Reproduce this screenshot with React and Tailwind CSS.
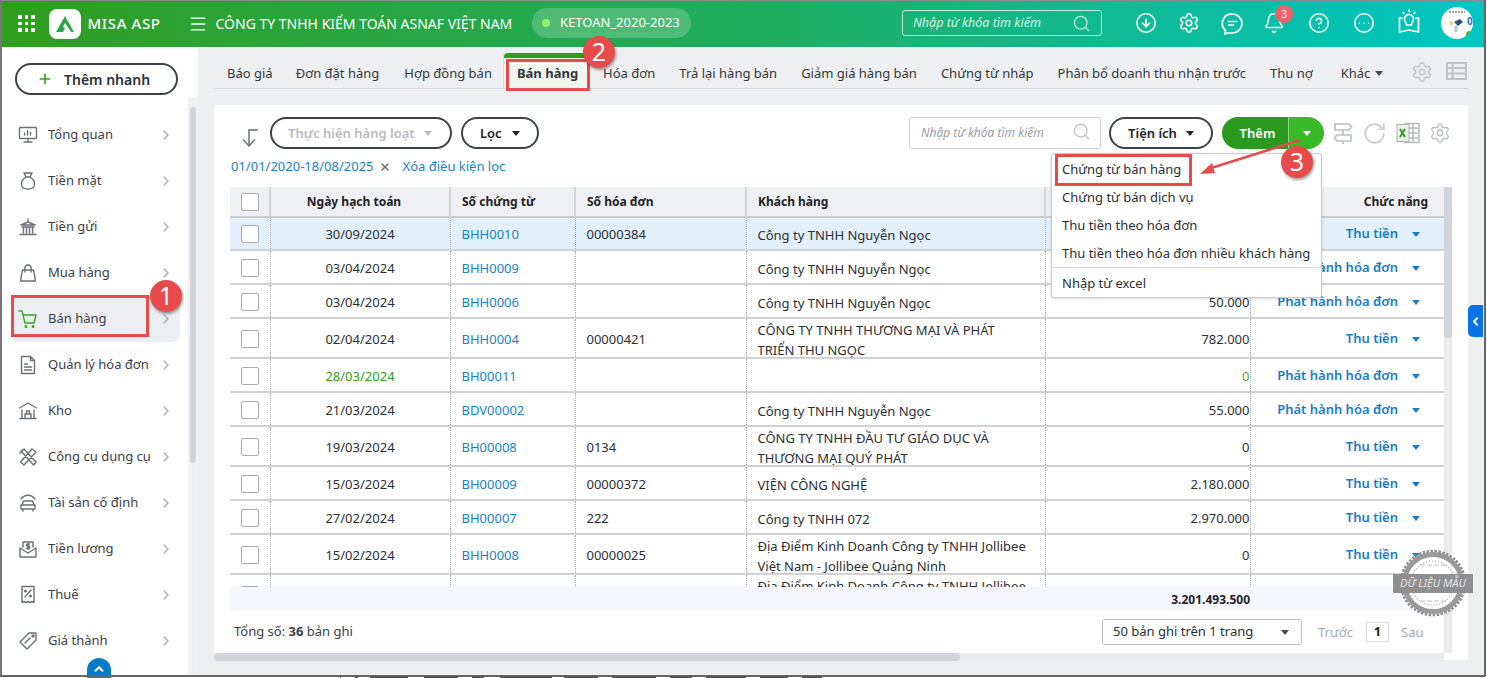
import { ChevronRight, CircleArrowDown, Settings, Bell, CircleHelp, CircleEllipsis, Search, Plus, X, Menu, RotateCw, ChevronUp, ChevronLeft } from 'lucide-react';

const FONT = 'font-["Noto_Sans","Liberation_Sans",sans-serif]';

const tabs = ['Báo giá', 'Đơn đặt hàng', 'Hợp đồng bán', 'Bán hàng', 'Hóa đơn', 'Trả lại hàng bán', 'Giảm giá hàng bán', 'Chứng từ nháp', 'Phân bổ doanh thu nhận trước', 'Thu nợ'];

const tabClass = {
  'Đơn đặt hàng': '-ml-[1px]',
  'Hợp đồng bán': 'ml-[1px]',
  'Bán hàng': 'font-bold ml-[1px] mr-[1px]',
};

const rows = [
  { h: 'h-[33px]', date: '30/09/2024', no: 'BHH0010', inv: '00000384', cust: 'Công ty TNHH Nguyễn Ngọc', amt: '', act: 'Thu tiền', on: true },
  { h: 'h-[34px]', date: '03/04/2024', no: 'BHH0009', inv: '', cust: 'Công ty TNHH Nguyễn Ngọc', amt: '', act: 'Phát hành hóa đơn' },
  { h: 'h-[34px]', date: '03/04/2024', no: 'BHH0006', inv: '', cust: 'Công ty TNHH Nguyễn Ngọc', amt: '50.000', act: 'Phát hành hóa đơn' },
  { h: 'h-[40px]', date: '02/04/2024', no: 'BHH0004', inv: '00000421', cust: 'CÔNG TY TNHH THƯƠNG MẠI VÀ PHÁT TRIỂN THU NGỌC', amt: '782.000', act: 'Thu tiền' },
  { h: 'h-[34px]', date: '28/03/2024', no: 'BH00011', inv: '', cust: '', amt: '0', act: 'Phát hành hóa đơn', green: true },
  { h: 'h-[34px]', date: '21/03/2024', no: 'BDV00002', inv: '', cust: 'Công ty TNHH Nguyễn Ngọc', amt: '55.000', act: 'Phát hành hóa đơn' },
  { h: 'h-[40px]', date: '19/03/2024', no: 'BH00008', inv: '0134', cust: 'CÔNG TY TNHH ĐẦU TƯ GIÁO DỤC VÀ THƯƠNG MẠI QUÝ PHÁT', amt: '0', act: 'Thu tiền' },
  { h: 'h-[34px]', date: '15/03/2024', no: 'BH00009', inv: '00000372', cust: 'VIỆN CÔNG NGHỆ', amt: '2.180.000', act: 'Thu tiền' },
  { h: 'h-[34px]', date: '27/02/2024', no: 'BH00007', inv: '222', cust: 'Công ty TNHH 072', amt: '2.970.000', act: 'Thu tiền' },
  { h: 'h-[40px]', date: '15/02/2024', no: 'BHH0008', inv: '00000025', cust: 'Địa Điểm Kinh Doanh Công ty TNHH Jollibee Việt Nam - Jollibee Quảng Ninh', amt: '0', act: 'Thu tiền' },
  { h: 'h-[40px]', date: '', no: '', inv: '', cust: 'Địa Điểm Kinh Doanh Công ty TNHH Jollibee Việt Nam - Jollibee Quảng Ninh', amt: '', act: '' },
];

const Ico = ({ children, green }) => (
  <svg width="20" height="20" viewBox="0 0 20 20" fill="none" stroke={green ? '#35a526' : '#6b7075'} strokeWidth="1.4" strokeLinecap="round" strokeLinejoin="round">
    {children}
  </svg>
);

const menu = [
  { name: 'Tổng quan', icon: <Ico><rect x="1.5" y="2.5" width="17" height="11" rx="1" /><path d="M10 13.5v3M6 17h8M6.5 10V8M9.5 10V5.5M12.5 10V7.5" /></Ico> },
  { name: 'Tiền mặt', icon: <Ico><path d="M6 2h8l-2 4H8zM8 6c-3 2-5 5-4.500 8 .4 3 3 4 6.500 4s6-1 6.500-4c.5-3-1.500-6-4.500-8" /></Ico> },
  { name: 'Tiền gửi', icon: <Ico><path d="M10 2v2M3 8l7-3 7 3zM4 10h12M5.500 10v6M8.500 10v6M11.500 10v6M14.500 10v6M2 17.500h16" /></Ico> },
  { name: 'Mua hàng', icon: <Ico><path d="M4.500 7h11l2 11h-15zM7 9V5a3 3 0 0 1 6 0v4" /></Ico> },
  { name: 'Bán hàng', icon: <Ico green><path d="M1 2h3l3 12h9l2-8H5" /><circle cx="8" cy="17.500" r=".8" fill="#35a526" /><circle cx="15" cy="17.500" r=".8" fill="#35a526" /></Ico>, on: true },
  { name: 'Quản lý hóa đơn', icon: <Ico><path d="M3.500 1.500h9l4 4v13h-13zM12.500 1.500v4h4M6.500 9h3M6.500 12h7M6.500 15h7" /></Ico> },
  { name: 'Kho', icon: <Ico><path d="M1.500 7 10 2l8.500 5M4 9v8M16 9v8M2 17.500h16M7 17v-4h6v4M8.500 13v-3h3v3" /></Ico> },
  { name: 'Công cụ dụng cụ', icon: <Ico><path d="m3 4 3-2 12 13-2.500 3zM14 2l4 3-12 13-3.500-3zM2 6l3-3" /></Ico> },
  { name: 'Tài sản cố định', icon: <Ico><path d="M3 6c4-5 10-5 14 0M4 12l1.500-4h9L16 12M3 12h14v4H3zM5 16v2M15 16v2" /></Ico> },
  { name: 'Tiền lương', icon: <Ico><path d="M5 8V3h10v5M2 9l8 5 8-5v9H2zM10 4.500v6M8.500 9.500h2a1 1 0 0 0 0-2.500h-1a1 1 0 0 1 0-2h2" /></Ico> },
  { name: 'Thuế', icon: <Ico><path d="M4 1.500h12v16l-2-1-2 1-2-1-2 1-2-1-2 1zM13 5l-6 7" /><circle cx="7.500" cy="6" r=".8" /><circle cx="12.500" cy="11" r=".8" /></Ico> },
  { name: 'Giá thành', icon: <Ico><path d="M11 2h7v7l-9 9-7-7zM7 12l5-5" /><circle cx="15" cy="5" r="1" /></Ico> },
];

const Caret = ({ className }) => <span className={`inline-block w-0 h-0 border-x-[4.5px] border-x-transparent border-t-[5px] ${className}`} />;

const Circle = ({ n, className }) => (
  <div className={`absolute flex items-center justify-center rounded-full bg-[#e84b4b] text-white text-[25px] font-["Liberation_Sans",sans-serif] shadow-[1px_2px_3px_rgba(0,0,0,0.4)] ${className}`}>{n}</div>
);

const Logo = () => (
  <div className="w-8 h-[30px] rounded-[8px] bg-white flex items-center justify-center">
    <svg width="22" height="20" viewBox="0 0 22 20" fill="none">
      <path d="M11 2 2 18h7l2-4-2-1 2-4 6 9h3z" fill="#2fa54a" />
    </svg>
  </div>
);

export default function App() {
  return (
    <div className={`relative w-[1487px] h-[678px] overflow-hidden bg-white text-[13px] text-[#2b2f33] ${FONT}`}>
      {/* Header */}
      <header className="absolute left-0 top-0 w-[1485px] h-[47px] flex items-center text-white bg-gradient-to-r from-[#2f9e1c] via-[#1fad5c] to-[#00c6c4]">
        <div className="ml-[18px] grid grid-cols-3 gap-[3px]">
          {[...Array(9)].map((_, i) => <span key={i} className="w-[3.500px] h-[3.500px] bg-white" />)}
        </div>
        <div className="ml-[14px]"><Logo /></div>
        <div className="ml-[7px] w-[80px] text-[15px] font-medium tracking-[0.6px] whitespace-nowrap">MISA ASP</div>
        <Menu size={20} strokeWidth={1.6} className="ml-[20px]" />
        <div className="ml-[8px] text-[14px] whitespace-nowrap">CÔNG TY TNHH KIỂM TOÁN ASNAF VIỆT NAM</div>
        <div className="absolute left-[532px] top-[8px] w-[159px] h-[30px] rounded-full bg-white/20 flex items-center pl-[10px]">
          <span className="w-2 h-2 rounded-full bg-[#8cf06a]" />
          <span className="ml-[10px] text-[13px]">KETOAN_2020-2023</span>
        </div>
        <div className="absolute left-[902px] top-[10px] w-[200px] h-[26px] rounded-[3px] border border-white/70 flex items-center pl-[10px] pr-[10px]">
          <span className="italic text-[12.500px] text-white/80">Nhập từ khóa tìm kiếm</span>
          <Search size={19} strokeWidth={1.6} className="ml-auto text-white/70" />
        </div>
        <CircleArrowDown size={22} strokeWidth={1.7} className="absolute left-[1135px] top-[12px]" />
        <Settings size={22} strokeWidth={1.7} className="absolute left-[1178px] top-[12px]" />
        <svg width="23" height="23" viewBox="0 0 23 23" fill="none" stroke="white" strokeWidth="1.700" strokeLinecap="round" className="absolute left-[1221px] top-[12px]">
          <path d="M11.500 2a9.500 9.500 0 0 1 0 19H6l-2 1 .5-3.500A9.500 9.500 0 0 1 11.500 2zM7.500 9.500h8M7.500 13h5" />
        </svg>
        <Bell size={22} strokeWidth={1.7} className="absolute left-[1263px] top-[12px]" />
        <div className="absolute left-[1275px] top-[5px] w-[18px] h-[18px] rounded-full bg-[#f0626a] text-[10px] flex items-center justify-center">3</div>
        <CircleHelp size={22} strokeWidth={1.7} className="absolute left-[1308px] top-[12px]" />
        <CircleEllipsis size={22} strokeWidth={1.7} className="absolute left-[1353px] top-[12px]" />
        <svg width="24" height="26" viewBox="0 0 24 26" fill="none" stroke="white" strokeWidth="1.700" strokeLinecap="round" strokeLinejoin="round" className="absolute left-[1397px] top-[9px]">
          <path d="M12 1v1.500M6 3.500l1 1M18 3.500l-1 1M8.500 13a4.500 4.500 0 1 1 7 0c-.7 1-1 1.500-1 3h-5c0-1.500-.3-2-1-3zM5 9H2.500v14L12 21l9.500 2V9H19" />
        </svg>
        <div className="absolute left-[1441px] top-[7px] w-[32px] h-[32px] rounded-full bg-white overflow-hidden">
          <svg width="32" height="32" viewBox="0 0 32 32">
            <path d="M8 5h16" stroke="#444" strokeWidth="1" strokeDasharray="2 1" />
            <path d="M13 15l6-3 3 3-5 4z" fill="#2a4f86" />
            <path d="M8 14l5 2-3 3z" fill="#e9d36a" />
            <path d="M15 19v6" stroke="#a9cbd6" strokeWidth="3" />
            <circle cx="29" cy="28" r="4" fill="#4aa52e" />
          </svg>
          <span className="absolute left-[26px] top-[7px] text-[10px] font-bold text-[#1673d1]">0</span>
        </div>
      </header>

      {/* Sidebar */}
      <aside className="absolute left-0 top-[47px] w-[198px] h-[629px] bg-white">
        <button className="absolute left-[15px] top-[16px] w-[163px] h-8 rounded-full border-2 border-[#3d4247] flex items-center pl-[20px] text-[14px] font-semibold bg-white">
          <Plus size={16} strokeWidth={2.400} className="text-[#2f9e1c] mr-[11px]" />
          Thêm nhanh
        </button>
        <nav className="absolute left-[14px] top-[65px] w-[166px] flex flex-col">
          {menu.map((m) => (
            <div key={m.name} className={`h-[46px] flex items-center pl-[4px] pr-[6px] ${m.on ? 'bg-[#eceef1] rounded-r-[8px]' : ''}`}>
              <span className="w-[30px] shrink-0">{m.icon}</span>
              <span className="whitespace-nowrap text-[#3c4045]">{m.name}</span>
              <ChevronRight size={16} strokeWidth={2} className="ml-auto text-[#a9adb2]" />
            </div>
          ))}
        </nav>
        <div className="absolute left-[188px] top-[50px] w-[10px] h-[579px] bg-[#f1f1f1]">
          <div className="absolute left-[2px] top-[10px] w-[6px] h-[356px] rounded-full bg-[#d1d5db]" />
        </div>
        <div className="absolute left-[87px] top-[611px] w-6 h-[24px] rounded-t-full bg-[#0a7bc8] flex justify-center pt-[4px] text-white">
          <ChevronUp size={14} strokeWidth={3.500} />
        </div>
      </aside>

      {/* Main */}
      <main className="absolute left-[198px] top-[47px] w-[1287px] h-[629px] bg-[#eeeff1]">
        {/* Tabs */}
        <div className="absolute left-[16px] top-0 w-[1255px] h-[42px] border-b-[1.5px] border-[#d6d8db]">
          <div className="absolute left-[289px] top-[6px] w-[85px] h-[36px] bg-[#f1f7ef] border-x border-[#dcdee1]">
            <div className="h-[5px] bg-[#2f9e1c] rounded-t-[4px]" />
          </div>
          <div className="relative flex gap-6 pl-[13px] pt-[17px] items-center whitespace-nowrap text-[#33373b]">
            {tabs.map((t) => (
              <span key={t} className={tabClass[t] || ''}>{t}</span>
            ))}
            <span className="flex items-center gap-[5px] ml-1">Khác <Caret className="border-t-[#44484c]" /></span>
          </div>
        </div>
        <Settings size={22} strokeWidth={1.700} className="absolute left-[1213px] top-[14px] text-[#c3c6ca]" />
        <svg width="21" height="18" viewBox="0 0 21 18" fill="none" stroke="#bfc3c7" strokeWidth="2" className="absolute left-[1248px] top-[15px]">
          <rect x="1" y="1" width="19" height="16" /><path d="M1 6h19M1 11.500h19M6.500 1v16" />
        </svg>

        {/* Card */}
        <section className="absolute left-[16px] top-[58px] w-[1254px] h-[555px] bg-white">
          <div className="flex items-center pt-3 h-[44px]">
            <svg width="20" height="20" viewBox="0 0 20 20" fill="none" stroke="#6d7176" strokeWidth="1.500" className="ml-[26px] mt-[10px]">
              <path d="M18 2H9v16M3 11.500 9 18l6-6.500" />
            </svg>
            <button className="ml-[10px] w-[182px] h-8 rounded-full border-2 border-[#3d4247] flex items-center pl-[16px] pt-[1px] font-semibold text-[#b9bbbe]">
              Thực hiện hàng loạt <Caret className="ml-[9px] border-t-[#b9bbbe]" />
            </button>
            <button className="ml-[9px] w-[78px] h-8 rounded-full border-2 border-[#3d4247] flex items-center pl-[17px] pt-[1px] font-semibold text-[#222]">
              Lọc <Caret className="ml-[10px] border-t-[#222]" />
            </button>
            <div className="ml-[370px] w-[192px] h-8 rounded-[3px] border border-[#cfd1d4] flex items-center pl-[11px] pr-[9px]">
              <span className="italic text-[12px] text-[#9a9da1]">Nhập từ khóa tìm kiếm</span>
              <Search size={19} strokeWidth={1.500} className="ml-auto text-[#b9bcc0] -mt-[3px]" />
            </div>
            <button className="ml-2 w-[104px] h-8 rounded-full border-2 border-[#3d4247] flex items-center justify-center pt-[1px] font-semibold text-[#222]">
              Tiện ích <Caret className="ml-[9px] border-t-[#222]" />
            </button>
            <div className="ml-[9px] w-[102px] h-8 rounded-full overflow-hidden flex text-white font-semibold">
              <div className="w-[66px] bg-[#2a9a1f] flex items-center justify-center pl-[5px] pt-[1px]">Thêm</div>
              <div className="flex-1 bg-[#38b928] border-l border-[#8fd285] flex items-center justify-center"><Caret className="border-t-white" /></div>
            </div>
            <svg width="22" height="24" viewBox="0 0 22 24" fill="none" stroke="#bcc0c4" strokeWidth="1.700" className="ml-[8px]">
              <path d="M3 3h14l2.500 3L17 9H3zM19 14H5l-2.500 3L5 20h14zM11 9v5M11 20v3" />
            </svg>
            <RotateCw size={25} strokeWidth={1.500} className="ml-[8px] text-[#c6c9cc]" />
            <svg width="24" height="22" viewBox="0 0 24 22" className="ml-[9px]">
              <rect x="9" y="1.500" width="14" height="19" fill="none" stroke="#b6babd" strokeWidth="1.500" />
              <path d="M13 6h9M13 11h9M13 16h9M17 2v18" stroke="#b6babd" strokeWidth="1.500" />
              <rect x="1" y="2.500" width="12" height="17" fill="#e9f2e6" stroke="#a9b7a6" />
              <path d="m4 7 5 8M9 7l-5 8" stroke="#3b9a2d" strokeWidth="2" />
            </svg>
            <Settings size={22} strokeWidth={1.500} className="ml-[9px] text-[#bcc0c4]" />
          </div>

          <div className="pl-[17px] mt-[9px] h-[18px] flex items-center text-[#1a82c4]">
            <span>01/01/2020-18/08/2025</span>
            <X size={12} strokeWidth={3} className="ml-[5px] text-[#6b7075]" />
            <span className="ml-[12px]">Xóa điều kiện lọc</span>
          </div>

          {/* Table */}
          <div className="absolute left-[16px] top-[82px] w-[1214px] h-[400px] overflow-hidden">
            <table className="w-[1214px] table-fixed border-collapse">
              <colgroup>
                <col className="w-[40px]" /><col className="w-[180px]" /><col className="w-[125px]" /><col className="w-[171px]" />
                <col className="w-[299px]" /><col className="w-[205px]" /><col className="w-[194px]" />
              </colgroup>
              <thead>
                <tr className="h-[30px] bg-[#eef0f4] border-b-2 border-[#c9cbce] font-bold text-[#222] text-[12px]">
                  <th className="border-r-2 border-[#d3d5d8] pl-[11px]"><Box /></th>
                  <th className="border-r-2 border-[#d3d5d8] font-bold pr-[12px]">Ngày hạch toán</th>
                  <th className="border-r-2 border-[#d3d5d8] text-left pl-[11px] font-bold">Số chứng từ</th>
                  <th className="border-r-2 border-[#d3d5d8] text-left pl-[11px] font-bold">Số hóa đơn</th>
                  <th className="border-r-2 border-[#d3d5d8] text-left pl-[11px] font-bold">Khách hàng</th>
                  <th className="border-r-2 border-[#d3d5d8]" />
                  <th className="text-right pr-[16px] font-bold">Chức năng</th>
                </tr>
              </thead>
              <tbody>
                {rows.map((r, i) => {
                  const pt = r.on ? 'pt-[2px]' : 'pt-[3px]';
                  return (
                    <tr key={i} className={`${r.h} border-b-2 border-[#d0d2d5] ${r.on ? 'bg-[#e2f0fb]' : ''}`}>
                      <td className={`border-r border-dotted border-[#a9abae] pl-[11px] ${r.on ? '' : 'pt-[2px]'}`}><Box /></td>
                      <td className={`border-r border-dotted border-[#a9abae] text-center ${pt} ${r.green ? 'text-[#2f9e1c]' : ''}`}>{r.date}</td>
                      <td className={`border-r border-dotted border-[#a9abae] pl-[11px] ${pt} text-[#1a82c4]`}>{r.no}</td>
                      <td className={`border-r border-dotted border-[#a9abae] pl-[11px] ${pt}`}>{r.inv}</td>
                      <td className={`border-r border-dotted border-[#a9abae] pl-[11px] pr-3 leading-[20px] ${r.on ? 'pt-[3px]' : 'pt-[4px]'}`}>
                        <div className="max-h-[28px] flex items-center"><span>{r.cust}</span></div>
                      </td>
                      <td className={`border-r border-dotted border-[#a9abae] text-right ${pt} ${r.green ? 'text-[#5aa82a]' : ''}`}>{r.amt}</td>
                      <td className={`text-right pr-[24px] font-semibold text-[#1a7cc6] whitespace-nowrap ${r.on ? '' : 'pt-[2px]'}`}>
                        {r.act}
                        {r.act && <Caret className="ml-[14px] border-t-[#1a7cc6] align-middle" />}
                      </td>
                    </tr>
                  );
                })}
              </tbody>
            </table>
          </div>
          <div className="absolute left-[16px] top-[482px] w-[1214px] h-[24px] bg-[#f5f7fc] text-right pr-[194px] text-[12px] font-bold text-[#222] leading-[26px]">
            3.201.493.500
          </div>

          {/* Footer */}
          <div className="absolute left-[20px] top-[517px] text-[#3c4045]">Tổng số: <b>36</b> bản ghi</div>
          <div className="absolute left-[888px] top-[514px] w-[200px] h-[26px] rounded-[3px] border border-[#bcbfc3] flex items-center pl-[10px] pr-[12px]">
            50 bản ghi trên 1 trang
            <Caret className="ml-auto border-t-[#44484c]" />
          </div>
          <div className="absolute left-[1104px] top-[518px] text-[#a7a9ad]">Trước</div>
          <div className="absolute left-[1152px] top-[517px] w-[23px] h-[20px] border border-[#dcdee1] flex items-center justify-center font-bold text-[#222]">1</div>
          <div className="absolute left-[1187px] top-[518px] text-[#a7a9ad]">Sau</div>

          {/* Scrollbars */}
          <div className="absolute left-[1230px] top-[82px] w-2 h-[466px] bg-[#ebebeb]">
            <div className="w-2 h-[151px] rounded-b-[4px] bg-[#d1d5db]" />
          </div>
          <div className="absolute left-0 top-[548px] w-[1230px] h-2 bg-[#ebebeb]">
            <div className="w-[746px] h-2 rounded-full bg-[#d1d5db]" />
          </div>
        </section>

        <div className="absolute left-[1270px] top-[258px] w-[15px] h-8 rounded-l-[5px] bg-[#0a73e8] flex items-center justify-center text-white">
          <ChevronLeft size={13} strokeWidth={3.500} />
        </div>
      </main>

      {/* Dropdown */}
      <div className="absolute left-[1051px] top-[153px] w-[271px] h-[145px] bg-white rounded-[3px] border border-[#c9cbce] shadow-[0_1px_3px_rgba(0,0,0,0.15)] text-[#2b2f33]">
        <div className="h-[28px] pl-[10px] flex items-center mt-[2px]">Chứng từ bán hàng</div>
        <div className="h-[28px] pl-[10px] flex items-center">Chứng từ bán dịch vụ</div>
        <div className="h-[28px] pl-[10px] flex items-center">Thu tiền theo hóa đơn</div>
        <div className="h-[27px] pl-[10px] flex items-center whitespace-nowrap">Thu tiền theo hóa đơn nhiều khách hàng</div>
        <div className="h-[30px] pl-[10px] pt-[2px] flex items-center border-t border-[#dcdee1]">Nhập từ excel</div>
      </div>

      {/* Stamp */}
      <svg width="70" height="70" viewBox="0 0 70 70" fill="none" className="absolute left-[1398px] top-[548px]">
        <circle cx="35" cy="35" r="32" stroke="#8d8d8d" strokeWidth="2.500" strokeDasharray="2.500 1.500" />
        <circle cx="35" cy="35" r="28.500" fill="white" stroke="#9a9a9a" strokeWidth="5" />
        <circle cx="35" cy="35" r="22" stroke="#a0a0a0" strokeWidth="1.200" strokeDasharray="1 2" />
        <path d="M22 17h26M22 53h26" stroke="#c0c0c0" strokeDasharray="5 2" />
      </svg>
      <div className="absolute left-[1393px] top-[574px] w-[80px] h-[19px] bg-[#8f8f8f] flex items-center justify-center italic text-[11px] text-[#e2e2e2] whitespace-nowrap">DỮ LIỆU MẪU</div>

      {/* Annotations */}
      <div className="absolute left-[11px] top-[295px] w-[138px] h-[42px] border-[3px] border-[#e84b4b]" />
      <div className="absolute left-[506px] top-[59px] w-[84px] h-[32px] border-[3px] border-[#e84b4b]" />
      <div className="absolute left-[1055px] top-[154px] w-[137px] h-[32px] border-[3px] border-[#e84b4b]" />
      <svg width="120" height="50" viewBox="0 0 120 50" fill="none" className="absolute left-[1190px] top-[132px]">
        <path d="M110 8 18 37" stroke="#e84b4b" strokeWidth="2.500" />
        <path d="m10 42 12-11 3 10z" fill="#e84b4b" />
      </svg>
      <Circle n="1" className="left-[150px] top-[280px] w-[32px] h-[32px]" />
      <Circle n="2" className="left-[583px] top-[36px] w-[32px] h-[32px]" />
      <Circle n="3" className="left-[1281px] top-[146px] w-[32px] h-[32px]" />

      {/* Window edge */}
      <div className="absolute left-0 top-0 w-[1485px] h-px bg-[#8a8a8a]" />
      <div className="absolute left-0 top-0 w-[2px] h-[676px] bg-[#777]" />
      <div className="absolute left-[1484px] top-0 w-[1.500px] h-[676px] bg-[#666]" />
      <div className="absolute left-0 top-[675px] w-[1485px] h-[1.500px] bg-[#666]" />
      <svg width="500" height="2" className="absolute left-[340px] top-[676px]">
        <path d="M0 1h1M15 1h3M30 1h38M84 1h34M132 1h12M160 1h52M224 1h34M272 1h44M330 1h22M366 1h40M420 1h28M462 1h20" stroke="#555" strokeWidth="2" />
      </svg>
    </div>
  );
}

function Box() {
  return <div className="w-[18px] h-[18px] rounded-[2px] border border-[#a9abae] bg-white" />;
}
